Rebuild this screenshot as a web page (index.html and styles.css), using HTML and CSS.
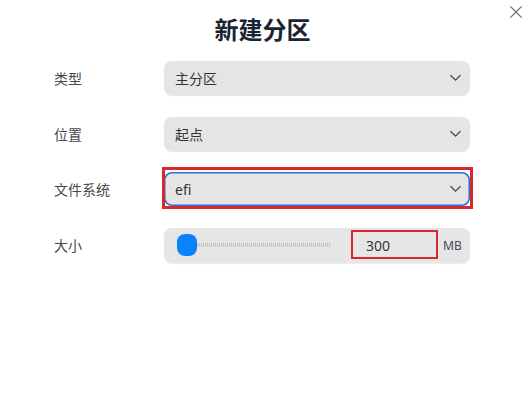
FILE: index.html
```html
<!DOCTYPE html>
<html lang="zh-CN">
<head>
<meta charset="utf-8">
<link rel="stylesheet" href="styles.css">
</head>
<body>
<div class="dialog">
  <button class="close" aria-label="关闭">
    <svg width="12" height="12" viewBox="0 0 12 12"><path d="M0.5 0.5 L11.5 11.5 M11.5 0.5 L0.5 11.5" stroke="#6b6f78" stroke-width="1.1" fill="none"/></svg>
  </button>
  <h1 class="title">新建分区</h1>
  <div class="form">
    <div class="label">类型</div>
    <div class="select"><span>主分区</span><svg class="chev" width="13" height="8" viewBox="0 0 13 8"><path d="M1.5 1.2 L6.5 6.2 L11.5 1.2" stroke="#4a4a4a" stroke-width="1.3" fill="none"/></svg></div>

    <div class="label">位置</div>
    <div class="select"><span>起点</span><svg class="chev" width="13" height="8" viewBox="0 0 13 8"><path d="M1.5 1.2 L6.5 6.2 L11.5 1.2" stroke="#4a4a4a" stroke-width="1.3" fill="none"/></svg></div>

    <div class="label">文件系统</div>
    <div class="select focused"><span>efi</span><svg class="chev" width="13" height="8" viewBox="0 0 13 8"><path d="M1.5 1.2 L6.5 6.2 L11.5 1.2" stroke="#4a4a4a" stroke-width="1.3" fill="none"/></svg><div class="mark mark-field"></div></div>

    <div class="label">大小</div>
    <div class="slider-box">
      <div class="thumb"></div>
      <div class="track"></div>
      <div class="num"><span>300</span><div class="mark mark-num"></div></div>
      <span class="unit">MB</span>
    </div>
  </div>
</div>
</body>
</html>
```
FILE: styles.css
```css
html, body {
  margin: 0;
  padding: 0;
  background: #ffffff;
}
body {
  font-family: "Noto Sans", "Noto Sans CJK SC", sans-serif;
  width: 531px;
  height: 400px;
  overflow: hidden;
}
.dialog {
  position: relative;
  width: 531px;
  height: 400px;
  display: flex;
  flex-direction: column;
}
.close {
  position: absolute;
  top: 6px;
  right: 9px;
  border: 0;
  background: none;
  padding: 0;
  width: 12px;
  height: 12px;
  display: flex;
}
.title {
  margin: 12px 0 15px;
  height: 34px;
  line-height: 34px;
  font-size: 24px;
  font-weight: 700;
  color: #1b2432;
  text-align: center;
  font-family: "Noto Sans CJK SC", sans-serif;
  padding-right: 6px;
}
.form {
  display: grid;
  grid-template-columns: 110px 306px;
  grid-auto-rows: 34px;
  row-gap: 21.5px;
  padding-left: 54px;
}
.label {
  display: flex;
  align-items: center;
  font-size: 14px;
  color: #444a52;
  font-family: "Noto Sans CJK SC", sans-serif;
}
.select {
  position: relative;
  display: flex;
  align-items: center;
  justify-content: space-between;
  background: #e5e5e5;
  border-radius: 8px;
  box-shadow: 0 1px 1px rgba(0,0,0,0.10);
  padding: 0 8px 0 11px;
  font-size: 14px;
  color: #333;
}
.select span {
  font-family: "Noto Sans", "Noto Sans CJK SC", sans-serif;
}
.focused {
  box-shadow: inset 0 0 0 1.5px #2f6fd0;
}
.mark {
  position: absolute;
  border: 3px solid #d8282b;
  pointer-events: none;
}
.mark-field {
  top: -5px;
  bottom: -3px;
  left: -2px;
  right: -3px;
}
.slider-box {
  display: flex;
  align-items: center;
  background: #e6e6e6;
  border-radius: 8px;
  box-shadow: 0 1px 1px rgba(0,0,0,0.08);
  padding-left: 13px;
  height: 35px;
}
.thumb {
  width: 20px;
  height: 22px;
  border-radius: 8px;
  background: #0a82fb;
  flex: none;
}
.track {
  width: 133px;
  height: 4px;
  background: repeating-linear-gradient(90deg, #c4c4c4 0 1px, transparent 1px 2px);
  flex: none;
}
.num {
  position: relative;
  margin-left: 21px;
  width: 87px;
  height: 28px;
  display: flex;
  align-items: center;
  padding-left: 15px;
  box-sizing: border-box;
  font-size: 14px;
  color: #333;
}
.mark-num {
  top: -1px;
  bottom: 0;
  left: 0;
  right: 0;
  border-width: 2.5px;
}
.unit {
  margin-left: 5px;
  font-size: 12px;
  color: #444a52;
}
```
